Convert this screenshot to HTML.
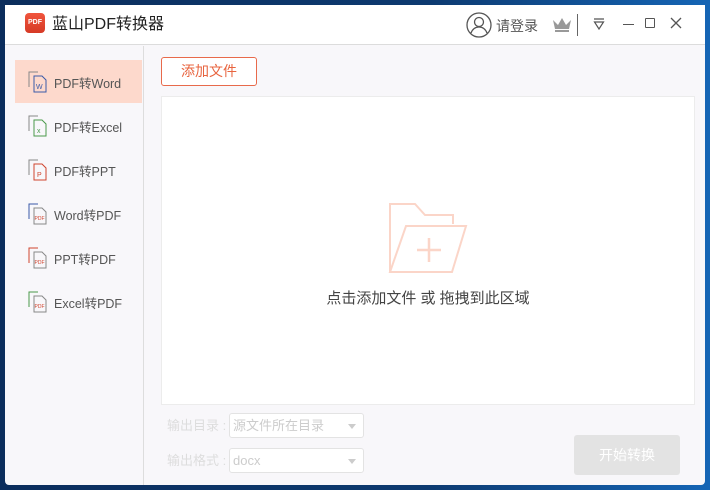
<!DOCTYPE html>
<html><head><meta charset="utf-8"><style>
*{margin:0;padding:0;box-sizing:border-box}
body{width:710px;height:490px;overflow:hidden;background:linear-gradient(90deg,#0b2d5c 0%,#0d3a70 60%,#1565b5 100%);font-family:"Liberation Sans","Noto Sans CJK SC",sans-serif;position:relative}
.win{position:absolute;left:5px;top:5px;width:700px;height:480px;background:#f8f7fa;border-radius:0 0 4px 4px;overflow:hidden}
.title{position:absolute;left:0;top:0;width:700px;height:40px;background:#fff;border-bottom:1px solid #dcdcdc}
.logo{position:absolute;left:20px;top:8px;width:20px;height:20px;border-radius:4px;background:linear-gradient(#f0553d,#d63a26);color:#fff;font-size:7px;font-weight:bold;text-align:center;line-height:20px}
.tt{position:absolute;left:47px;top:9px;font-size:16px;color:#222;line-height:22px}
.side{position:absolute;left:0;top:41px;width:139px;height:439px;border-right:1px solid #ddd}
.item{position:absolute;left:10px;width:127px;height:43px;font-size:12.5px;color:#555}
.item.act{background:#fdd9cc}
.item span{position:absolute;left:39px;top:13px}
.item svg{position:absolute;left:12px;top:10px}
.btn{position:absolute;left:156px;top:52px;width:96px;height:29px;border:1px solid #e86a4b;border-radius:3px;background:#fff;color:#e8643f;font-size:14px;text-align:center;line-height:27px}
.drop{position:absolute;left:156px;top:91px;width:534px;height:309px;background:#fff;border:1px solid #ececec}
.dt{position:absolute;left:0;width:100%;top:190px;text-align:center;font-size:15px;color:#444}
.lbl{position:absolute;left:162px;font-size:13px;color:#ddd}
.sel{position:absolute;left:224px;width:135px;height:25px;border:1px solid #e3e3e3;border-radius:3px;background:#fff;font-size:13px;color:#ccc;padding-left:3px;line-height:23px}
.sel:after{content:"";position:absolute;right:7px;top:10px;border:4px solid transparent;border-top:5px solid #ccc}
.start{position:absolute;left:569px;top:430px;width:106px;height:40px;background:#e3e3e3;border-radius:3px;color:#fff;font-size:14px;text-align:center;line-height:40px}
</style></head><body>
<div class="win">
<div class="title">
<div class="logo">PDF</div><div class="tt">蓝山PDF转换器</div>
<svg style="position:absolute;left:461px;top:7px" width="26" height="26" viewBox="0 0 26 26" fill="none" stroke="#555" stroke-width="1.3"><circle cx="13" cy="13" r="12"/><circle cx="13" cy="10" r="4.5"/><path d="M5 21c2-5 5-6 8-6s6 1 8 6"/></svg>
<div style="position:absolute;left:491px;top:11px;font-size:14px;color:#555">请登录</div>
<svg style="position:absolute;left:547px;top:12px" width="20" height="16" viewBox="0 0 20 16"><path d="M1 3l5 5 4-7 4 7 5-5-2 9H3z" fill="#999"/><rect x="3" y="13" width="14" height="2" fill="#999"/></svg>
<div style="position:absolute;left:572px;top:9px;width:1px;height:22px;background:#666"></div>
<svg style="position:absolute;left:587px;top:12px" width="14" height="14" viewBox="0 0 14 14" fill="none" stroke="#555" stroke-width="1.2"><path d="M2 2h10M2.5 5h9L7 12z"/></svg>
<div style="position:absolute;left:618px;top:19px;width:11px;height:1px;background:#555"></div>
<div style="position:absolute;left:640px;top:13px;width:10px;height:10px;border:1.3px solid #555;border-radius:1px"></div>
<svg style="position:absolute;left:665px;top:12px" width="12" height="12" viewBox="0 0 12 12" stroke="#555" stroke-width="1.3"><path d="M1 1l10 10M11 1L1 11"/></svg>
</div>
<div class="side">
<div class="item act" style="top:14px"><svg width="22" height="24" viewBox="0 0 22 24" fill="none" stroke="#888"><path d="M2 17V2h9"/><path d="M7 6h8l4 4v12H7z" stroke="#3a5aa8"/><text x="9" y="19" font-size="7" fill="#3a5aa8" stroke="none">W</text></svg><span>PDF转Word</span></div>
<div class="item" style="top:58px"><svg width="22" height="24" viewBox="0 0 22 24" fill="none" stroke="#888"><path d="M2 17V2h9"/><path d="M7 6h8l4 4v12H7z" stroke="#4a9a4a"/><text x="10" y="19" font-size="7" fill="#4a9a4a" stroke="none">x</text></svg><span>PDF转Excel</span></div>
<div class="item" style="top:102px"><svg width="22" height="24" viewBox="0 0 22 24" fill="none" stroke="#888"><path d="M2 17V2h9"/><path d="M7 6h8l4 4v12H7z" stroke="#d0452e"/><text x="10" y="19" font-size="7" fill="#d0452e" stroke="none">P</text></svg><span>PDF转PPT</span></div>
<div class="item" style="top:146px"><svg width="22" height="24" viewBox="0 0 22 24" fill="none"><path d="M2 17V2h9" stroke="#3a5aa8"/><path d="M7 6h8l4 4v12H7z" stroke="#888"/><text x="7.5" y="18" font-size="5" fill="#d0452e">PDF</text></svg><span>Word转PDF</span></div>
<div class="item" style="top:190px"><svg width="22" height="24" viewBox="0 0 22 24" fill="none"><path d="M2 17V2h9" stroke="#d0452e"/><path d="M7 6h8l4 4v12H7z" stroke="#888"/><text x="7.5" y="18" font-size="5" fill="#d0452e">PDF</text></svg><span>PPT转PDF</span></div>
<div class="item" style="top:234px"><svg width="22" height="24" viewBox="0 0 22 24" fill="none"><path d="M2 17V2h9" stroke="#4a9a4a"/><path d="M7 6h8l4 4v12H7z" stroke="#888"/><text x="7.5" y="18" font-size="5" fill="#d0452e">PDF</text></svg><span>Excel转PDF</span></div>
</div>
<div class="btn">添加文件</div>
<div class="drop">
<svg style="position:absolute;left:224px;top:103px" width="84" height="76" viewBox="0 0 84 76" fill="none" stroke="#fbd5c8" stroke-width="2"><path d="M4 72V4h25l10 11h28v9"/><path d="M4 72l16-46h60L66 72z"/><path d="M43 38v24M31 50h24" stroke-width="2.5"/></svg>
<div class="dt">点击添加文件 或 拖拽到此区域</div>
</div>
<div class="lbl" style="top:410px">输出目录 :</div>
<div class="sel" style="top:408px">源文件所在目录</div>
<div class="lbl" style="top:445px">输出格式 :</div>
<div class="sel" style="top:443px">docx</div>
<div class="start">开始转换</div>
</div>
</body></html>
